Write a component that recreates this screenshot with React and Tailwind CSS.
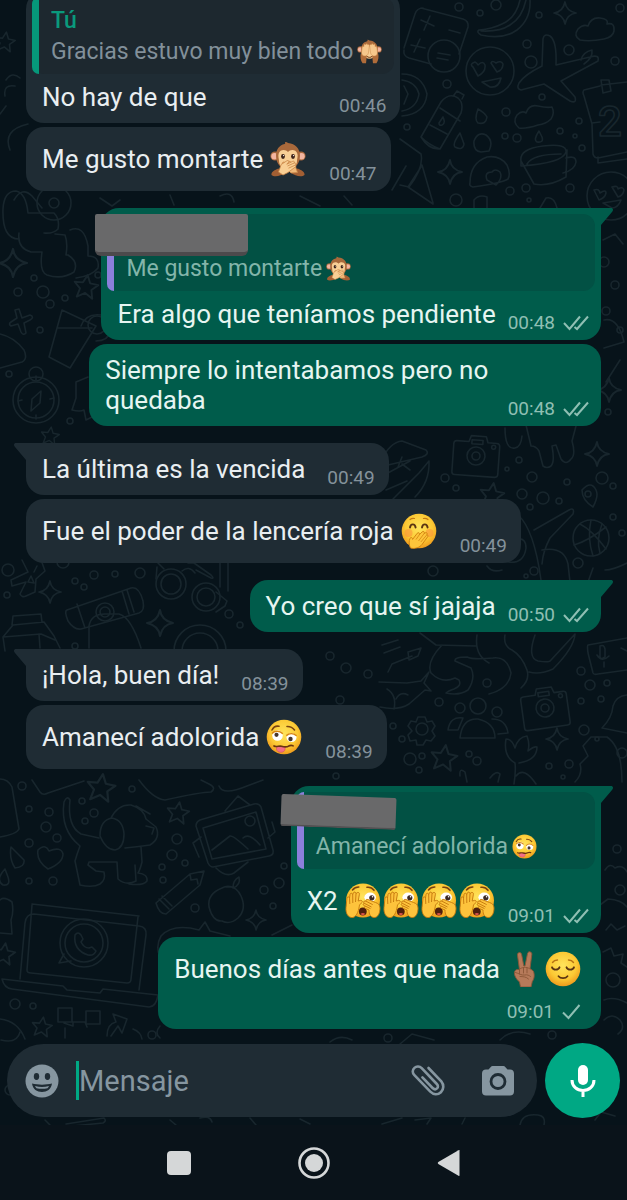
import { useState } from "react";

const messages = [
  {
    id: 1,
    text: "No hay de que",
    time: "00:46",
    quote: { author: "Tú", text: "Gracias estuvo muy bien todo", emoji: "seeNoEvil" },
  },
  { id: 2, text: "Me gusto montarte", emojis: ["speakNoEvil"], time: "00:47" },
  {
    id: 3,
    mine: true,
    first: true,
    text: "Era algo que teníamos pendiente",
    time: "00:48",
    status: "delivered",
    quote: { text: "Me gusto montarte", emoji: "speakNoEvil", cover: "straight" },
  },
  { id: 4, mine: true, text: "Siempre lo intentabamos pero no quedaba", time: "00:48", status: "delivered" },
  { id: 5, first: true, text: "La última es la vencida", time: "00:49" },
  { id: 6, text: "Fue el poder de la lencería roja", emojis: ["giggle"], time: "00:49" },
  { id: 7, mine: true, first: true, text: "Yo creo que sí jajaja", time: "00:50", status: "delivered" },
  { id: 8, first: true, text: "¡Hola, buen día!", time: "08:39" },
  { id: 9, text: "Amanecí adolorida", emojis: ["woozy"], time: "08:39" },
  {
    id: 10,
    mine: true,
    first: true,
    text: "X2",
    emojis: ["peeking", "peeking", "peeking", "peeking"],
    time: "09:01",
    status: "delivered",
    quote: { text: "Amanecí adolorida", emoji: "woozy", cover: "tilted" },
  },
  {
    id: 11,
    mine: true,
    stacked: true,
    text: "Buenos días antes que nada",
    emojis: ["victory", "relieved"],
    time: "09:01",
    status: "sent",
  },
];

function MonkeyHead() {
  return (
    <>
      <circle cx="5" cy="15" r="4.600" fill="#a8683c" />
      <circle cx="31" cy="15" r="4.600" fill="#a8683c" />
      <circle cx="4.600" cy="15.200" r="3.300" fill="#f3b5a0" />
      <circle cx="31.400" cy="15.200" r="3.300" fill="#f3b5a0" />
      <path d="M18 2c-1-.9-2-1-3-.8.4.6.3 1.200-.3 1.900C9 4.300 6 9 6 14.500 6 23 11 28 18 28s12-5 12-13.500C30 8 25.500 2.500 18 2z" fill="#a9693b" />
      <path d="M18 11c-2-3-8-3-9.300 1.400-.9 3 .3 5 .3 7.600C9 25 13 28 18 28s9-3 9-8c0-2.600 1.200-4.600.3-7.600C26 8 20 8 18 11z" fill="#f8cf96" />
    </>
  );
}

const emojiArt = {
  seeNoEvil: {
    label: "🙈",
    art: (
      <>
        <MonkeyHead />
        <path d="M5.500 21h9l-1.500 14h-5C5 31 4.500 26 5.500 21zM30.500 21h-9L23 35h5c3-4 3.500-9 2.500-14z" fill="#b06c3a" />
        <path d="M6.500 20l1-8.500c.3-1.600 2-1.400 2.200 0l.4-3c.3-1.700 2.300-1.500 2.400.1l.5-1.100c.7-1.300 2.400-.7 2.300.8l1-.3c1.300-.2 1.700 1 1.400 2.200L16.500 20c-.6 3-2.500 4.500-5 4.500S6.500 22.500 6.500 20z" fill="#f6c78c" stroke="#c98647" strokeWidth=".7" />
        <path d="M29.500 20l-1-8.500c-.3-1.600-2-1.400-2.200 0l-.4-3c-.3-1.700-2.300-1.500-2.400.1l-.5-1.100c-.7-1.300-2.400-.7-2.300.8l-1-.3c-1.300-.2-1.700 1-1.400 2.200L19.500 20c.6 3 2.500 4.500 5 4.500s5-2 5-4.500z" fill="#f6c78c" stroke="#c98647" strokeWidth=".7" />
        <path d="M14.500 25.200c1.800 1.800 5.200 1.800 7 0" fill="none" stroke="#6b3510" strokeWidth="1.400" strokeLinecap="round" />
      </>
    ),
  },
  speakNoEvil: {
    label: "🙊",
    art: (
      <>
        <MonkeyHead />
        <ellipse cx="13" cy="15.500" rx="1.900" ry="2.400" fill="#3d241b" />
        <ellipse cx="23" cy="15.500" rx="1.900" ry="2.400" fill="#3d241b" />
        <circle cx="13.500" cy="14.600" r=".6" fill="#fff" />
        <circle cx="23.500" cy="14.600" r=".6" fill="#fff" />
        <path d="M1.500 34c-.5-3 3-5 7-6.500l6 4.500c-3 3-10.500 4.500-13 2zM34.500 34c.5-3-3-5-7-6.500l-6 4.500c3 3 10.500 4.500 13 2z" fill="#a35f33" />
        <path d="M27.500 31.500L25 24l-5-3.500c-1.400-.8-2.400.5-1.300 1.600L13 21l-1 2 4 4 5 5z" fill="#f0b878" stroke="#c98647" strokeWidth=".8" />
        <path d="M8.500 31l2.700-7.500 5.800-3.800c1.500-.8 2.600.6 1.300 1.800l-1.500 1.700 6-2.900c1.700-.6 2.200 1.200.9 2l1-.3c1.500-.2 1.600 1.500.3 2.100 1-.1 1.300 1.300.3 1.900L18 31.500 13 34z" fill="#f9cf94" stroke="#c98647" strokeWidth=".8" />
        <path d="M17.500 25l6.200-2.800M18.500 27.200l6.500-3" stroke="#c98647" strokeWidth=".8" />
      </>
    ),
  },
  giggle: {
    label: "🤭",
    art: (
      <>
        <circle cx="18" cy="18" r="17.300" fill="url(#face)" />
        <circle cx="7.500" cy="20" r="4" fill="#fb8a3c" opacity=".5" />
        <circle cx="28.500" cy="20" r="4" fill="#fb8a3c" opacity=".5" />
        <path d="M9 14.500c.6-4.200 5-4.200 5.600 0M21 14.500c.6-4.200 5-4.200 5.600 0" fill="none" stroke="#5b3412" strokeWidth="1.900" strokeLinecap="round" />
        <path d="M9 6.500c1.500-1.200 2.800-1.500 4.500-1M22.500 5.500c1.700-.5 3-.2 4.500 1" fill="none" stroke="#c47a13" strokeWidth="1.200" strokeLinecap="round" />
        <path d="M9.500 35c-1.600-3-1.800-7.300-.4-9.800.9-1.400 2.600-.5 2.500 1.200l4.600-6.100c1.200-1.400 3-.1 2.200 1.400l2.700-2.800c1.400-1.200 3 .3 2 1.700l1.200-.8c1.600-.8 2.500 1 1.500 2.100.9-.1 1.600 1.100.8 2L21 31.500c-1.800 2.500-7 5-11.500 3.500z" fill="#fdc53b" stroke="#cf7f0e" strokeWidth=".9" />
        <path d="M18.400 21.700L15 26.500M23.100 20.600L17.500 28M25.800 21.900L19.800 29" stroke="#d98b16" strokeWidth=".9" />
      </>
    ),
  },
  woozy: {
    label: "🥴",
    art: (
      <>
        <circle cx="18" cy="18" r="17.300" fill="url(#face)" />
        <path d="M6 11c1.500-3 4-4.300 7-3.700M21 7.500c3-.2 5.600 1 7.500 3.500" fill="none" stroke="#7a4310" strokeWidth="1.600" strokeLinecap="round" />
        <circle cx="11.500" cy="16.500" r="5.300" fill="#fff" />
        <ellipse cx="25.500" cy="18.500" rx="5" ry="4.600" fill="#fff" />
        <path d="M6 14.500c2.500-2.800 7.500-3 10.800.3M20.300 16.600c3-2.600 7.200-2.400 10.300.2" fill="none" stroke="#d9850f" strokeWidth="1.500" />
        <circle cx="10.500" cy="15.800" r="2.100" fill="#49372e" />
        <circle cx="24.500" cy="20" r="2.200" fill="#49372e" />
        <path d="M10.500 27.500v2.300c0 4.500 8.500 4.700 8.600.1v-2.100z" fill="#f36f86" stroke="#d2495f" strokeWidth=".6" />
        <path d="M8 27c2.500 1.500 5-.6 7.500.2 3 1 5 1.300 7.200-.1 1.500-.9 2.700-1 4.300-.3" fill="none" stroke="#6b3510" strokeWidth="1.700" strokeLinecap="round" />
      </>
    ),
  },
  peeking: {
    label: "🫣",
    art: (
      <>
        <circle cx="18" cy="17.500" r="17" fill="url(#face)" />
        <path d="M7.500 7c1.600-2 3.600-3 6.300-3M22 4.300c3-.4 5.300.6 7 3" fill="none" stroke="#7a4310" strokeWidth="1.600" strokeLinecap="round" />
        <ellipse cx="25.200" cy="14.200" rx="5.800" ry="4.600" fill="#fff" />
        <circle cx="26.800" cy="14.800" r="2.600" fill="#3b2a24" />
        <circle cx="27.600" cy="13.800" r=".8" fill="#fff" />
        <ellipse cx="17.800" cy="28.500" rx="3.900" ry="3.900" fill="#4f1f0e" />
        <path d="M15.500 31c1.200-1.500 3.600-1.500 4.700 0-1.200 1.500-3.500 1.500-4.700 0z" fill="#d9534a" />
        <path d="M1 24.500L2 15c.3-1.700 2.400-1.500 2.500.2l.5-3.700c.3-1.800 2.600-1.600 2.700.2l.6-1.700c.6-1.600 2.800-1.100 2.700.7l1-.9c1-1 2.800-.1 2.400 1.500L13.200 18l2.300-.6c1.900-.3 2.500 1.900.8 2.700L14.500 22c-.8 5-2 11-6.500 12.500-5 .7-7.500-4.500-7-10z" fill="#fdc33c" stroke="#c4770c" strokeWidth=".9" />
        <path d="M4.500 15.200L4.800 21M7.700 11.700L7.800 20M11 10.700L10.500 19" stroke="#c4770c" strokeWidth=".9" />
        <path d="M35 25c0-3-2-4.800-4.500-5.500l-7.600-3c-1.800-.7-2.700 1.100-1.200 2.100l-1.500-.5c-1.700-.4-2.300 1.600-.7 2.300-1.500-.2-1.900 1.600-.5 2.200l1.500.8c-1.300.1-1.500 1.500-.3 2l3.800 1.600c-.2 4.200 1.700 7.300 5 7.500 4 .2 6-4.500 6-9.500z" fill="#fdc33c" stroke="#c4770c" strokeWidth=".9" />
        <path d="M21.700 18.600l6 3M19.500 20.400l7 3.600M20.500 23.200l5 2.400" stroke="#c4770c" strokeWidth=".9" />
      </>
    ),
  },
  victory: {
    label: "✌🏽",
    art: (
      <>
        <path d="M12.500 19L10.500 4.200C10.200 1 13.800.3 14.600 3.400L16.800 15h1.200L20.500 2.600c.8-3 4.700-2.200 4.300 1l-1.800 13.900 3.300 2.500c1.700 4 .8 8-1 10.500L24 36H13.500l-1-5C9 28 7.200 24.500 7.400 21.500c.3-2.500 3-4 5.100-2.500z" fill="#b67a5a" stroke="#8a5637" strokeWidth=".9" />
        <path d="M13.500 17.500c3-1.800 7.500-1.500 9.500.5M12.500 19v4M16.500 17v5M20 17.200v4.600M8.500 21.500c3.500 1 6 3 9 2.500 3-.6 4.500.4 6 1.500M13 25.500c3 .2 6 0 8.500 2.500" fill="none" stroke="#8a5637" strokeWidth=".9" strokeLinecap="round" />
      </>
    ),
  },
  relieved: {
    label: "😌",
    art: (
      <>
        <circle cx="18" cy="18" r="17.300" fill="url(#face)" />
        <path d="M7.500 11.500c1-1.500 2.600-2.500 5-2.500M23.500 9c2.400 0 4 1 5 2.500" fill="none" stroke="#b87314" strokeWidth="1.400" strokeLinecap="round" />
        <path d="M7 16.300c1.200 3 6.300 3 7.500 0M21.500 16.300c1.200 3 6.300 3 7.500 0M13.500 25.200c2 2.500 7 2.500 9 0" fill="none" stroke="#5b3412" strokeWidth="1.800" strokeLinecap="round" />
      </>
    ),
  },
};

function Emoji({ name, small }) {
  const { label, art } = emojiArt[name];
  return (
    <svg
      viewBox="0 0 36 36"
      role="img"
      aria-label={label}
      className={small ? "h-[25px] w-[25px] shrink-0" : "mx-px h-9 w-9 shrink-0"}
    >
      {art}
    </svg>
  );
}

function Ticks({ status }) {
  return (
    <svg
      viewBox="0 0 26 18"
      className="h-[18px] w-[26px]"
      fill="none"
      stroke="#8fbfb3"
      strokeWidth="2"
      role="img"
      aria-label={status === "sent" ? "Enviado" : "Entregado"}
    >
      {status === "sent" ? <path d="M1 9.500L6.500 15 17.500 2" /> : <path d="M1 9l5.500 6L17 2.500M11.500 13l2.500 2L25 2.500" />}
    </svg>
  );
}

function Tail({ mine }) {
  return mine ? (
    <svg viewBox="0 0 12 18" className="absolute top-0 left-full h-[18px] w-3" fill="#005c4b">
      <path d="M0 0h10c2 0 2.600 2 1.400 3.400L0 17z" />
    </svg>
  ) : (
    <svg viewBox="0 0 12 18" className="absolute top-0 right-full h-[18px] w-3" fill="#1f2c34">
      <path d="M12 0H2C0 0-.6 2 .6 3.400L12 17z" />
    </svg>
  );
}

function Quote({ quote, mine }) {
  return (
    <div className={`relative mx-1.5 mt-1.5 flex rounded-xl ${mine ? "bg-[#025144]" : "bg-[#1d282f]"}`}>
      <div className={`w-[7px] shrink-0 rounded-l-xl ${mine ? "bg-[#8b7fdb]" : "bg-[#06987a]"}`} />
      <div className="pt-2 pr-3 pb-[7px] pl-3">
        <p className="h-[31px] text-[23px] leading-[31px] font-medium text-[#0a9a7c]">{quote.author}</p>
        <p
          className={`flex items-center gap-1 text-[23px] leading-[31px] whitespace-nowrap ${
            mine ? "text-[#83b5aa]" : "text-[#82909a]"
          }`}
        >
          {quote.text}
          <Emoji name={quote.emoji} small />
        </p>
      </div>
      {quote.cover === "straight" ? (
        <div className="absolute top-0 -left-3 h-[42px] w-[153px] rounded-xs rounded-b-md border-b-4 border-[#4c4a4c] bg-[#69696a]" />
      ) : null}
      {quote.cover === "tilted" ? (
        <div className="absolute top-1 -left-4 h-8 w-[115px] rotate-2 rounded-xs border-b-2 border-[#525052] bg-[#69696a]" />
      ) : null}
    </div>
  );
}

function Bubble({ message }) {
  const { mine, first, stacked, text, emojis, time, status, quote } = message;
  const corner = first ? (mine ? "rounded-tr-none" : "rounded-tl-none") : "";

  return (
    <li
      className={`relative max-w-[89%] shrink-0 rounded-[18px] ${corner} ${
        mine ? "self-end bg-[#005c4b]" : "self-start bg-[#1f2c34]"
      } ${first ? "mt-[17px]" : "mt-1"}`}
    >
      {first ? <Tail mine={mine} /> : null}
      {quote ? <Quote quote={quote} mine={mine} /> : null}
      <div
        className={`flex pl-4 ${stacked ? "flex-col pr-[13px]" : "items-end justify-between"} ${
          quote && !emojis ? "pt-2" : "pt-[11px]"
        }`}
      >
        <p
          className={`flex items-center gap-1.5 text-[26px] leading-[30px] ${
            mine ? "text-[#e6f5f1]" : "text-[#e9eef1]"
          } ${stacked ? "pr-1.5" : "mb-[11px]"} ${emojis ? "min-h-[42px]" : ""}`}
        >
          {text}
          {emojis ? (
            <span className="flex shrink-0">
              {emojis.map((name, index) => (
                <Emoji key={index} name={name} />
              ))}
            </span>
          ) : null}
        </p>
        <div
          className={`flex shrink-0 items-center justify-end gap-2 pb-[5px] text-[19px] leading-6 ${
            mine ? "text-[#8fbfb3]" : "text-[#84929b]"
          } ${stacked ? "pt-2.5" : mine ? "pr-3 pl-3" : "pr-3.5 pl-[22px]"}`}
        >
          <time>{time}</time>
          {status ? <Ticks status={status} /> : null}
        </div>
      </div>
    </li>
  );
}

const dots = [
  [459, 7, 4], [496, 5, 5], [539, 15, 3], [480, 13, 3], [620, 8, 4], [527, 44, 4], [531, 62, 6], [569, 50, 5],
  [615, 61, 4], [447, 84, 4], [542, 97, 3], [506, 112, 4], [517, 138, 4], [505, 136, 3], [560, 131, 3], [579, 121, 3],
  [575, 136, 2], [582, 148, 3], [407, 127, 3], [456, 200, 6], [510, 191, 4], [526, 188, 4], [570, 188, 4], [529, 200, 2],
  [34, 278, 3], [18, 292, 4], [43, 292, 6], [65, 298, 3], [50, 304, 4], [98, 275, 3], [40, 330, 3], [9, 374, 3], [70, 421, 3],
  [445, 478, 4], [456, 488, 3], [507, 469, 2], [519, 460, 3], [532, 477, 5], [522, 494, 5], [543, 498, 6], [530, 507, 3],
  [559, 501, 3], [567, 482, 3], [602, 478, 6], [613, 486, 3], [613, 517, 3], [622, 533, 3], [578, 563, 5], [534, 571, 4], [526, 576, 2],
  [433, 571, 5], [8, 570, 6], [63, 562, 6], [7, 595, 3], [75, 581, 3], [84, 587, 3], [94, 575, 4], [115, 574, 3], [140, 573, 5],
  [229, 614, 4], [240, 625, 3], [75, 646, 3], [487, 683, 4], [439, 702, 4], [581, 671, 4], [590, 685, 5], [607, 683, 3],
  [581, 701, 3], [601, 699, 3], [584, 730, 5], [597, 739, 2], [622, 753, 5], [393, 726, 3], [402, 739, 3], [410, 759, 6],
  [422, 756, 3], [419, 770, 3], [469, 754, 3], [477, 761, 4], [549, 766, 3], [569, 764, 4], [563, 777, 2],
  [22, 786, 4], [132, 789, 3], [82, 801, 3], [29, 809, 3], [49, 812, 4], [94, 813, 4], [85, 821, 3], [46, 827, 5], [57, 838, 4],
  [29, 843, 4], [29, 881, 3], [53, 881, 4], [177, 839, 5], [172, 855, 5], [162, 867, 3], [185, 863, 3], [163, 880, 3],
  [195, 908, 4], [264, 890, 4], [279, 883, 5], [273, 906, 3], [284, 866, 3], [15, 1004, 5], [33, 1006, 3], [152, 1035, 4],
  [613, 980, 7], [617, 849, 4], [620, 890, 5], [340, 700, 4], [336, 776, 3], [346, 668, 5], [368, 674, 4], [330, 656, 4],
  [604, 262, 5], [615, 285, 4], [606, 311, 4], [620, 330, 3], [608, 412, 3], [10, 1090, 5], [552, 1035, 4], [388, 1038, 4],
];

const stars = [
  [565, 13, 11], [450, 172, 12], [13, 263, 14], [597, 454, 12], [50, 592, 11], [160, 623, 13], [557, 739, 11], [256, 920, 10], [609, 390, 12],
];

const roundStars = [
  [86, 287, 12], [492, 495, 12], [444, 758, 13], [101, 788, 14], [178, 813, 11], [4, 954, 11], [42, 1027, 10], [5, 42, 10], [50, 436, 9],
];

const outlines = [
  // calculator and coin
  "M421 8l42 11q6 2 5 8l-9 27M404 50q-1 6 5 8l22 6M404 48l11-34q2-6 8-6M421 20l13 6M430 16l-6 14M449 30l11 3M411 45l14 3M420 39l-6 13M438 53l12 2M437 58l11 2",
  // banana, plane, clouds
  "M520 0q-4 18-18 24-10 5-23 6q-3 2 2 5 22 5 36-5 14-11 13-30M526 0q-4 18-16 25-10 7-29 6",
  "M542 66l1-27q1-6 7-3 7 5 6 29l34-8q10-3 8 4l-37 20 14 16q2 7-5 4l-26-17-23 6q-5-1-2-7 5-8 23-17zM581 60q2-8 11-10 1 8-8 14",
  "M580 40q-7-4-2-11 5-5 10-3 3-9 12-8 9 1 7 6 8-2 7 7-1 6-10 8-14 3-24 1zM519 128q-7-6-2-13 5-5 9-2 3-9 12-7 9 2 14 1 3 6-1 12-5 5-13 6-12 4-19 3z",
  // bottle and drops
  "M421 137l20-35q8-10 17-4 6 5 3 15l-21 36q-11 1-19-12zM421 137q8 8 19 12M440 108l20 13M430 125l17 9M454 95l3-4 7 4-2 4M443 117l-4 6q0 3 3 2 4-2 1-8M478 109q-4 11 0 14 8 2 9-6-2-4-9-8zM460 133q-8 11-5 14 8 4 9-3zM539 131q-6 9-2 11 7 1 5-5z",
  // smiles
  "M473 67q-4-3 2-5 2 1 3 3 5-5 7 0 1 7-7 11zM491 63q1-3 5 0 5-3 7 1 0 6-6 8zM482 82l19-4q-2 10-11 9zM594 190q5-2 6 3 6-4 6 0-1 5-7 7zM612 187q6-2 6 2 5-3 6 1-1 6-6 7zM603 203l18-3q-3 8-9 8z",
  // calendar
  "M627 82l-26 3M600 86l-16 4q-2 2 0 6l8 28 1 30q1 4 5 4l29-6M592 123l8-1M598 157v6l29-4M601 80h8l2 11-8 2z",
  // cup, bowl, note
  "M521 161q-2-12 22-15 24-3 23 6-3 11-45 14zl13 23q15 3 32-7l1-27M566 158q10-3 10 4-1 8-13 11M527 164q6-10 34-10M470 183q0-20 17-26 13-2 20 8 4 9 1 14-6 4-35 8-4-1-3-4zM487 180q-3-8 5-8 3-4 8 0 3 6-4 13zM481 152q-8-1-7-11 4-10 12-6 8 6 3 16zM400 139l21 15q3 14-12 33l-9-2M422 165l11 38M421 167l-13 20 25 17M474 208v-8q5-6 13-3v11M540 208l6-10q8-2 11 10",
  // sitting figures
  "M3 209q1-18 13-18 10 2 12 22l26 0q6 6 4 16-5 5-14 4M3 209q-1 30 16 30M19 233q-2 15 12 19h11q-3 20 5 23 15 5 27-3 5-10-6-17h-2q2-12-1-20l-10-1M70 230q14-6 18 16l0 10q12 0 10 12-6 8-22 10",
  // drink, cross, compass
  "M62 310l34 16-26 42-21-11zM58 328l34 0M81 326q5-13 20-11 10 4 9 17-2 9-14 9M19 309l3 9 8-3q5 2 0 5l-6 3 2 10q-3 3-5-1l-3-8-7 2q-3-2 0-4l6-4-2-8zM0 334q14 3 24 16 4 9-2 12l-22 6M41 391l-1 12-9 8 1-12zM36 376v4M36 415v4M18 401l4-1M50 399l4-1M88 377l-12 5 0 16-4 12q8 2 12 0l2 10 6-3",
  // jewellery and leaves
  "M380 462q10-20 22-21l24 9q4 4-4 7l-34 8M386 474l24-13M386 490l21-9M415 497q15-15 14-36l-10 12-26 26M398 467l4-10M402 464l8 6",
  // tooth
  "M505 428q0 22 10 20 6-1 7-12M526 425l5 21q5 0 8 5l4 15q4 3 8 0 4-4 1-20l4-1 5 14q5 7 10 0 5-4 1-18l4-15",
  // pin and dragon
  "M582 490q9-10 14 0 3 6-3 17-11-7-11-17zM518 515q16 14 23 65M534 530l35-20q6-3 4 4l-23 24q-7 13-8 26M542 550q22-4 26 14l2 18M518 539q8-1 8 9-2 16-18 14M487 566q5 7 15 4M588 582l5-14M605 570q8 0 22-7",
  // bluetooth, roll and milk carton
  "M22 560l6 12-17 8 1 6 14-4-6 12q2 4 6 2l9-4 1-13 9-8-5-14M28 582l3-6 3 7zM34 572l3-6",
  "M67 610l64-22q8-2 12 13 2 10-4 12l-58 16q-7 1-13-8-4-10-1-11M77 604l8 24M122 591l7 23M127 590l7 22",
  "M89 648v-22q2-12 16-12h14q12 3 22 34M3 637l10-12 31-3 10 14 6 12M3 637l38-3 14 6M39 634l1 14M12 625l1-9 28-2 1 8M3 637l2 14",
  // binoculars
  "M157 562l7 7M157 567l-1 12M182 571q7-6 13 2M216 592l11 9-2 5-9 6M188 563h6l17 12q4 4 0 3l-15-8M220 560v27M228 560v31",
  // message and fish
  "M380 707q18 4 29-3l16-14 6 1-7-8 5-11-8 9-14 2-28-1M394 709q3-14-7-20M396 699q4-8 12-4M382 645l16-5M384 653l16-6M408 652l13-4-3 8-9 4zM388 672l4-8 20-8",
  // octopus
  "M420 633l16 12 40 1M442 645q-16 17-11 28 11 11 24 5l4 2q3 6-5 9-6 2-8 4 13 3 22-3 8-12 3-22l-16-7q-1-4 12-4 6 3 26 1 14-2 18 15-2 16-22 21M477 635q-3 20 12 28M505 635q-2 11 7 15 10 6 15 20 3 10-6 18M535 635q-8 23 3 26 12 2 13-1l24-26q-1 14-22 35-13 6-24 3",
  // people
  "M460 738q2-20 18-19 17 4 17 19zM448 730q2-14 15-12l-5 12zM492 719q14 0 16 14l-10 1",
  // ticket and bell
  "M588 645l39-7M588 645q-1 0 0 8l5 20q1 2 5 1l29-4M600 646q4-2 5 3v8q-4 3-5 0zM597 655q5 8 12 1M604 662v5M621 648l6 3M602 728q10-10 11-22 3-10 14-11M602 728l25 5",
  // tulip
  "M514 784q2-13 1-21-12-7-9-24 6 0 9 9 3-11 12-12 3 8 1 15 6-5 9-4 0 13-18 16M516 776q8-10 20 8M460 776q-1-9 5-4l2 10M490 778q6-8 10-4l-2 8M575 782q8-8 5-18l8-8-5-10 8-9 16 0q15 10 15 45",
  // lizard and dog
  "M139 780q14 19 26 20 36-8 46-8 6-4-2-8l-8-4M219 786q4 10 28 0l16-6M0 779q8 0 12 8l7 42q-2 5-19 8M32 780l8 12q3 4 8 1l36-12",
  "M64 802q3-7 6-2-3 26 11 34l18 4M64 802q-4 28 16 44-3 8-5 15l5 24q13 3 20-1 6-4 4-12l-8-1-8-6 1-3h28l1 17q8 7 18 2l-1-16M141 847l1 15q-2 8-4 11 10 1 9 8-4 5-18 3M100 836q0-16 12-18 11 2 12 16 0 14-9 16-9 0-15-14zM111 818q7-14 20-13 13 4 15 14l10 8q5 11-6 18-14 2-25 3M146 826l8 2-2 6M136 806l14 8",
  "M11 847q-2 12 4 21 10-1 9-8zM5 869q-10 11-2 16 8 1 5-8zM38 850q7-7 11 1 12-5 14 3 0 9-15 15-12-8-10-19z",
  // photo, pencil, apple
  "M200 820l54-16q5-1 7 3l12 43q1 5-4 6l-56 11q-3 0-5-4l-12-37q0-4 4-6zM203 828l53-16 10 37-54 10zM212 850l18-14q3-1 18 13M243 838q6-6 17 7M225 811l13-15 12 9M216 868q10 10 18 5l14-11M272 822l3 10-7 6M201 837l-8 6 6 14",
  "M156 903l34-29 14-3-4 14-34 29q-7 0-10-11zM159 899l10 10M162 896l10 10M190 874l1 6 6-1 1 5M232 887q-5-2-10 1-15 6-13 19 4 15 13 14 8 4 16-3 9-9 3-22-5-11-15-9zM233 888q0-8 6-11 2 8-6 11",
  // laptop
  "M20 979l5-56q1-9 9-9l105 12q8 1 7 9l-7 55M32 904l107 12M32 905l-5 65q0 3 4 3l96 10q4 0 4-4l7-62M2 979l61 7 4 4 33 3 3-4 55 6q-2 12-9 12l-137-18q-8-1-10-10z",
  "M64 954l-5 9 12-2M75 935q3-4 6 0l2 4-2 3q3 6 8 6l3-1 4 4q-2 5-8 4-15-5-13-20",
  // pig, flags
  "M165 965q-12-15-4-29 12-13 38-6l6-8 5 9 20 5M0 900q4-4 12 2 2 10-1 18l1 14-12-1M272 935l20-10M58 1008h14v14h-14zM86 1011h14v13h-14zM64 1023l9 3v-4h12l2 5M65 1028v10M107 1036q0-12 9-14l-3-8 14 5-5 14-4-7-7 10M133 1029q8 3 9 10M0 1019q18 2 25 20M160 1038q-6-5 0-12",
  // under the right edge
  "M605 870q5-8 10-2 8-4 12 4M600 905l8-6q14 1 19 8M606 930l5-6 6 6 8-4M603 952l8-4 3 8 9-2-2 9 6 4M604 1000q10-4 23 3M604 1020q8-8 16 0 6 8-2 14M604 320q14-3 20 22l-20 6M620 360l-14 22M603 240l12-6 8 10",
  // below the composer
  "M45 1120l5 5M66 1124l38-6q3 3-1 5l-40 4M170 1120l6 5M200 1118q10-3 12 4M250 1118l6 7M300 1119l10 5M382 1124l20-6M415 1120l16-2-4 6M465 1118l-3 6M520 1125q2-12 18-10 8 1 6 10M595 1120l6-8 14 4M1 1040q16 4 19-8M330 1042q10-8 22-2M400 1044l12-10 22 6M500 1040q12-12 30-6",
  // around the top bubbles
  "M10 150q-8-20 18-26M0 114l6-8M6 80q6-9 14-2M5 96q-2-12 10-10M402 74q20 0 25 20-2 20-25 22M402 80q14 2 17 14-2 14-17 17M404 86l4 8-4 10M14 200q8-14 18-4l10 12M100 198l12 8 8-6M170 195l4 10M220 196q12-6 14 6M300 196l20 10M344 196l8 9M392 190l14-24",
];

function Wallpaper() {
  return (
    <svg
      viewBox="0 0 627 1125"
      preserveAspectRatio="xMidYMid slice"
      className="absolute inset-0 h-full w-full"
      fill="none"
      stroke="#18262d"
      strokeWidth="1.600"
      strokeLinecap="round"
      strokeLinejoin="round"
      aria-hidden="true"
    >
      <defs>
        <radialGradient id="face" cx=".5" cy=".4" r=".6">
          <stop offset="0" stopColor="#ffe45c" />
          <stop offset=".65" stopColor="#fcc934" />
          <stop offset="1" stopColor="#ee9a1c" />
        </radialGradient>
      </defs>
      {dots.map(([x, y, r]) => (
        <circle key={`${x}-${y}`} cx={x} cy={y} r={r} />
      ))}
      {stars.map(([x, y, r]) => (
        <path
          key={`${x}-${y}`}
          transform={`translate(${x} ${y}) scale(${r / 10})`}
          d="M0-10Q1-2 10 0 2 1 0 10-1 2-10 0-2-1 0-10z"
        />
      ))}
      {roundStars.map(([x, y, r]) => (
        <path
          key={`${x}-${y}`}
          transform={`translate(${x} ${y}) scale(${r / 10}) rotate(8)`}
          d="M0-10L3-3.500 10-3 4.800 1.800 6.500 9 0 5-6.500 9-4.800 1.800-10-3-3-3.500z"
        />
      ))}
      {outlines.map((d) => (
        <path key={d} d={d} />
      ))}
      <circle cx="444" cy="56" r="16" />
      <circle cx="490" cy="71" r="24" />
      <circle cx="611" cy="196" r="24" />
      <circle cx="54" cy="203" r="17" />
      <circle cx="54" cy="203" r="5" />
      <circle cx="36" cy="400" r="23" />
      <circle cx="36" cy="400" r="18" />
      <circle cx="36" cy="374" r="7" />
      <circle cx="97" cy="325" r="9" />
      <circle cx="171" cy="584" r="15" />
      <circle cx="171" cy="584" r="10" />
      <circle cx="206" cy="597" r="14" />
      <circle cx="206" cy="597" r="9" />
      <circle cx="105" cy="612" r="9" />
      <circle cx="105" cy="612" r="5" />
      <circle cx="200" cy="651" r="26" />
      <circle cx="200" cy="651" r="18" />
      <circle cx="84" cy="943" r="24" />
      <circle cx="84" cy="943" r="19" />
      <circle cx="250" cy="821" r="5" />
      <circle cx="588" cy="494" r="3" />
      <text x="598" y="136" fontSize="42" fontFamily="Roboto, sans-serif" fontWeight="500">
        2
      </text>
      <g>
        <circle cx="591" cy="538" r="18" />
        <path d="M574 545q14-4 32-18M580 524q12 6 26 25M591 520q-4 18 2 36M602 524q-6 16-2 29" />
      </g>
      <g>
        <circle cx="422" cy="729" r="6" />
        <path d="M418 717h7l2 5 5-1 3 5-3 5 3 5-4 5-5-1-3 5h-6l-1-5-6 1-2-6 4-4-4-5 3-5 5 1z" />
      </g>
      <circle cx="478" cy="706" r="8" />
      <circle cx="460" cy="708" r="5" />
      <circle cx="497" cy="712" r="5" />
      {[
        [476, 456, 4],
        [545, 708, -8],
      ].map(([x, y, turn]) => (
        <g key={x} transform={`translate(${x} ${y}) rotate(${turn})`}>
          <path d="M-20-14h12l2-6h15l2 6h9q3 0 3 3v28q0 3-3 3h-40q-3 0-3-3v-28q0-3 3-3zM-5-16h11v4h-11z" />
          <circle r="9" />
          <circle r="4" />
          <circle cx="17" cy="-10" r="2" />
        </g>
      ))}
    </svg>
  );
}

function Composer() {
  const [draft, setDraft] = useState("");

  return (
    <form className="relative flex items-center gap-2 px-[7px] pt-3.5 pb-[7px]" onSubmit={(event) => event.preventDefault()}>
      <div className="flex h-[73px] min-w-0 flex-1 items-center rounded-full bg-[#1f2c34] pr-[22px] pl-[18px] text-[#8696a0]">
        <button type="button" aria-label="Emojis" className="shrink-0">
          <svg viewBox="0 0 34 34" className="h-[34px] w-[34px]">
            <circle cx="17" cy="17" r="16.500" fill="currentColor" />
            <ellipse cx="11.500" cy="12.500" rx="2.700" ry="3.400" fill="#1f2c34" />
            <ellipse cx="22.500" cy="12.500" rx="2.700" ry="3.400" fill="#1f2c34" />
            <path d="M7 19.500c6 1.500 14 1.500 20 0-.8 5.800-5 8.500-10 8.500S7.800 25.300 7 19.500z" fill="#1f2c34" />
            <path d="M10 22c5 1.300 9 1.300 14 0-.4 1-.9 1.800-1.500 2.300-3.700.7-7.300.7-11 0C10.900 23.800 10.400 23 10 22z" fill="currentColor" />
          </svg>
        </button>
        <span className="ml-[17px] h-[39px] w-[3px] shrink-0 bg-[#00a884]" />
        <input
          aria-label="Mensaje"
          placeholder="Mensaje"
          value={draft}
          onChange={(event) => setDraft(event.target.value)}
          className="min-w-0 flex-1 bg-transparent text-[29px] leading-9 text-[#e9eef1] outline-none placeholder:text-[#8696a0]"
        />
        <button type="button" aria-label="Adjuntar" className="shrink-0">
          <svg viewBox="0 0 34 34" className="h-[34px] w-[34px]" fill="none" stroke="currentColor" strokeWidth="2.600" strokeLinecap="round">
            <path d="M17.500 4L30.300 17.300c2.700 3.200 2.700 8-.4 10.900-3.200 2.900-7.500 2.600-10.600-.5L3.400 11.200c-2.200-2.300-2.200-5.300 0-7.300 2.100-2 5.200-1.800 7.300.3L25.800 20c1.400 1.500 1.500 3.200.2 4.400-1.300 1.200-3 1-4.400-.4L11.400 13.400" />
          </svg>
        </button>
        <button type="button" aria-label="Cámara" className="ml-9 shrink-0">
          <svg viewBox="0 0 34 34" className="h-[34px] w-[34px]">
            <path d="M11.500 2h11c.8 0 1.200.3 1.700.9L26.500 5.500H29c2.500 0 4 1.500 4 4v18c0 2.500-1.500 4-4 4H5c-2.500 0-4-1.500-4-4v-18c0-2.500 1.500-4 4-4h2.500l2.300-2.600c.5-.6.900-.9 1.700-.9z" fill="currentColor" />
            <circle cx="17" cy="17.500" r="7" fill="none" stroke="#1f2c34" strokeWidth="2.800" />
          </svg>
        </button>
      </div>
      <button
        type="submit"
        aria-label="Mensaje de voz"
        className="flex size-[75px] shrink-0 items-center justify-center rounded-full bg-[#00a884]"
      >
        <svg viewBox="0 0 26 34" className="h-[34px] w-[26px]" fill="none">
          <rect x="8" y="1" width="10" height="20" rx="5" fill="#fff" />
          <path d="M2 16c0 6.500 5 10.500 11 10.500S24 22.500 24 16M13 26.500V33" stroke="#fff" strokeWidth="3" />
        </svg>
      </button>
    </form>
  );
}

function NavBar() {
  return (
    <nav className="flex h-[75px] shrink-0 items-center justify-center bg-[#0a131a] text-[#d5d7d8]">
      <button type="button" aria-label="Recientes" className="flex w-[135px] justify-center">
        <span className="size-6 rounded-sm bg-current" />
      </button>
      <button type="button" aria-label="Inicio" className="flex w-[135px] justify-center">
        <svg viewBox="0 0 32 32" className="size-8">
          <circle cx="16" cy="16" r="14.500" fill="none" stroke="currentColor" strokeWidth="2.600" />
          <circle cx="16" cy="16" r="9" fill="currentColor" />
        </svg>
      </button>
      <button type="button" aria-label="Atrás" className="flex w-[135px] justify-center">
        <svg viewBox="0 0 24 28" className="h-7 w-6" fill="currentColor">
          <path d="M22.500 1.500v25q0 .8-1 .3L1.300 15q-1.200-1 0-2L21.500 1.200q1-.5 1 .3z" />
        </svg>
      </button>
    </nav>
  );
}

export default function App() {
  return (
    <div className="flex h-screen flex-col overflow-hidden bg-[#07131a] font-['Roboto',sans-serif]">
      <main className="relative flex min-h-0 flex-1 flex-col overflow-hidden">
        <Wallpaper />
        <ul className="relative flex min-h-0 flex-1 flex-col justify-end overflow-hidden px-[26px]">
          {messages.map((message) => (
            <Bubble key={message.id} message={message} />
          ))}
        </ul>
        <Composer />
      </main>
      <NavBar />
    </div>
  );
}
